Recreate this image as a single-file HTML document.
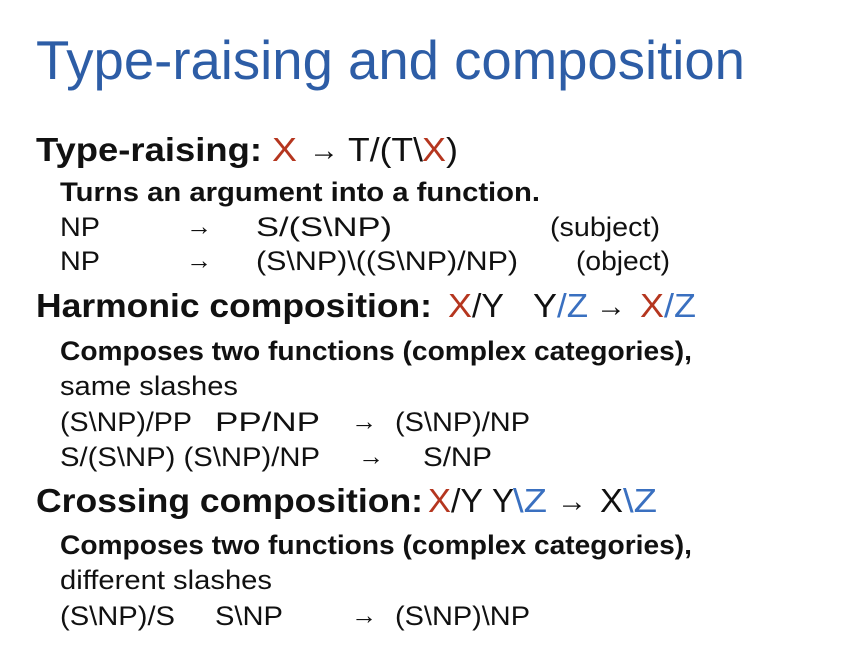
<!DOCTYPE html>
<html><head><meta charset="utf-8"><style>
html,body{margin:0;padding:0;background:#fff;}
svg{display:block}
text{font-family:"Liberation Sans",Arial,sans-serif;fill:#111;}
.b{font-weight:bold}
.r{fill:#b5361f}
.u{fill:#3a70c0}
</style></head><body>
<svg width="856" height="659" viewBox="0 0 856 659" xmlns="http://www.w3.org/2000/svg">
<rect width="856" height="659" fill="#fff"/>
<text x="36" y="79" font-size="55" style="fill:#2d5da6" textLength="709" lengthAdjust="spacingAndGlyphs">Type-raising and composition</text>

<text class="b" x="36" y="161" font-size="33" textLength="226" lengthAdjust="spacingAndGlyphs">Type-raising:</text>
<text class="r" x="272" y="161" font-size="33" textLength="25" lengthAdjust="spacingAndGlyphs">X</text>
<text x="309" y="160" font-size="30">→</text>
<text x="348" y="161" font-size="33" textLength="75" lengthAdjust="spacingAndGlyphs">T/(T\</text>
<text class="r" x="422" y="161" font-size="33" textLength="24" lengthAdjust="spacingAndGlyphs">X</text>
<text x="446" y="161" font-size="33" textLength="12" lengthAdjust="spacingAndGlyphs">)</text>

<text class="b" x="60" y="201" font-size="27" textLength="480" lengthAdjust="spacingAndGlyphs">Turns an argument into a function.</text>
<text x="60" y="236" font-size="27" textLength="40" lengthAdjust="spacingAndGlyphs">NP</text>
<text x="186" y="235" font-size="26">→</text>
<text x="256" y="236" font-size="27" textLength="136" lengthAdjust="spacingAndGlyphs">S/(S\NP)</text>
<text x="550" y="236" font-size="27" textLength="110" lengthAdjust="spacingAndGlyphs">(subject)</text>
<text x="60" y="270" font-size="27" textLength="40" lengthAdjust="spacingAndGlyphs">NP</text>
<text x="186" y="269" font-size="26">→</text>
<text x="256" y="270" font-size="27" textLength="262" lengthAdjust="spacingAndGlyphs">(S\NP)\((S\NP)/NP)</text>
<text x="576" y="270" font-size="27" textLength="94" lengthAdjust="spacingAndGlyphs">(object)</text>

<text class="b" x="36" y="317" font-size="33" textLength="396" lengthAdjust="spacingAndGlyphs">Harmonic composition:</text>
<text class="r" x="448" y="317" font-size="33" textLength="24" lengthAdjust="spacingAndGlyphs">X</text>
<text x="472" y="317" font-size="33" textLength="32" lengthAdjust="spacingAndGlyphs">/Y</text>
<text x="533" y="317" font-size="33" textLength="24" lengthAdjust="spacingAndGlyphs">Y</text>
<text class="u" x="557" y="317" font-size="33" textLength="31" lengthAdjust="spacingAndGlyphs">/Z</text>
<text x="596" y="316" font-size="30">→</text>
<text class="r" x="640" y="317" font-size="33" textLength="24" lengthAdjust="spacingAndGlyphs">X</text>
<text class="u" x="664" y="317" font-size="33" textLength="32" lengthAdjust="spacingAndGlyphs">/Z</text>

<text class="b" x="60" y="360" font-size="27" textLength="632" lengthAdjust="spacingAndGlyphs">Composes two functions (complex categories),</text>
<text x="60" y="395" font-size="27" textLength="178" lengthAdjust="spacingAndGlyphs">same slashes</text>
<text x="60" y="431" font-size="27" textLength="132" lengthAdjust="spacingAndGlyphs">(S\NP)/PP</text>
<text x="215" y="431" font-size="27" textLength="105" lengthAdjust="spacingAndGlyphs">PP/NP</text>
<text x="351" y="430" font-size="26">→</text>
<text x="395" y="431" font-size="27" textLength="135" lengthAdjust="spacingAndGlyphs">(S\NP)/NP</text>
<text x="60" y="466" font-size="27" textLength="260" lengthAdjust="spacingAndGlyphs">S/(S\NP) (S\NP)/NP</text>
<text x="358" y="465" font-size="26">→</text>
<text x="423" y="466" font-size="27" textLength="69" lengthAdjust="spacingAndGlyphs">S/NP</text>

<text class="b" x="36" y="512" font-size="33" textLength="387" lengthAdjust="spacingAndGlyphs">Crossing composition:</text>
<text class="r" x="428" y="512" font-size="33" textLength="23" lengthAdjust="spacingAndGlyphs">X</text>
<text x="451" y="512" font-size="33" textLength="32" lengthAdjust="spacingAndGlyphs">/Y</text>
<text x="492" y="512" font-size="33" textLength="22" lengthAdjust="spacingAndGlyphs">Y</text>
<text class="u" x="513" y="512" font-size="33" textLength="34" lengthAdjust="spacingAndGlyphs">\Z</text>
<text x="557" y="511" font-size="30">→</text>
<text x="600" y="512" font-size="33" textLength="23" lengthAdjust="spacingAndGlyphs">X</text>
<text class="u" x="623" y="512" font-size="33" textLength="34" lengthAdjust="spacingAndGlyphs">\Z</text>

<text class="b" x="60" y="554" font-size="27" textLength="632" lengthAdjust="spacingAndGlyphs">Composes two functions (complex categories),</text>
<text x="60" y="589" font-size="27" textLength="212" lengthAdjust="spacingAndGlyphs">different slashes</text>
<text x="60" y="625" font-size="27" textLength="115" lengthAdjust="spacingAndGlyphs">(S\NP)/S</text>
<text x="215" y="625" font-size="27" textLength="68" lengthAdjust="spacingAndGlyphs">S\NP</text>
<text x="351" y="624" font-size="26">→</text>
<text x="395" y="625" font-size="27" textLength="135" lengthAdjust="spacingAndGlyphs">(S\NP)\NP</text>
</svg>
</body></html>
